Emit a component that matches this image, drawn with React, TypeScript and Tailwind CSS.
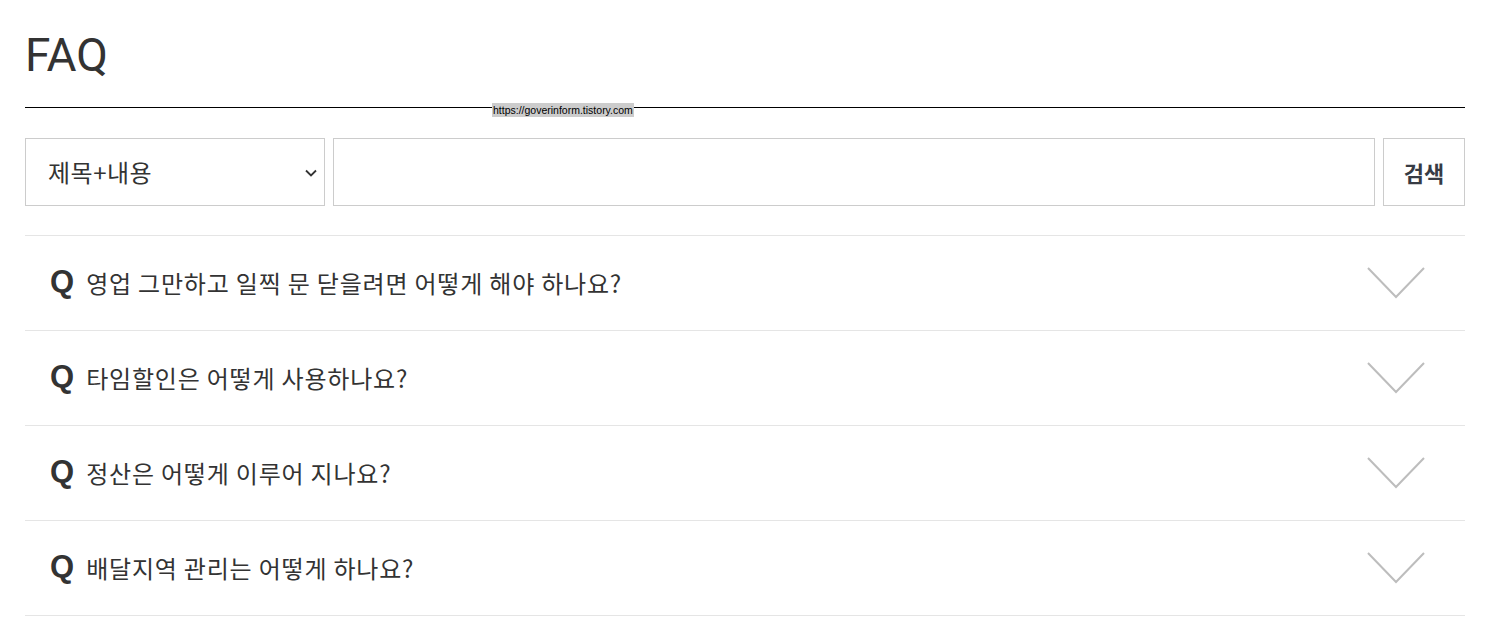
import React from 'react';

const faqs = [
  '영업 그만하고 일찍 문 닫을려면 어떻게 해야 하나요?',
  '타임할인은 어떻게 사용하나요?',
  '정산은 어떻게 이루어 지나요?',
  '배달지역 관리는 어떻게 하나요?',
];

const kr = { fontFamily: '"Malgun Gothic", "Noto Sans CJK KR", "Noto Sans", sans-serif' };

const Chevron = () => (
  <svg width="58" height="32" viewBox="0 0 58 32" fill="none">
    <path d="M1 1 L29 30 L57 1" stroke="#bdbdbd" strokeWidth="2" />
  </svg>
);

const App = () => {
  return (
    <div className="w-full min-h-screen bg-white px-[25px] pt-[27px] text-[#333]">
      {/* Title */}
      <h1
        className="text-[46px] leading-[56px] font-normal"
        style={{ fontFamily: 'Roboto, "Noto Sans", sans-serif' }}
      >
        FAQ
      </h1>
      <div className="relative mt-[24px] border-t border-black w-[1440px]">
        <span
          className="absolute left-[467px] top-[-5px] bg-[#cccccc] px-[1px] text-[10.5px] leading-[14px] text-black"
          style={{ fontFamily: '"Liberation Sans", Arial, sans-serif' }}
        >
          https://goverinform.tistory.com
        </span>
      </div>

      {/* Search */}
      <div className="mt-[30px] flex gap-[8px] w-[1440px] h-[68px]" style={kr}>
        <div className="relative w-[300px] h-full border border-[#cccccc] flex items-center pl-[22px] text-[24px] tracking-[0.5px]">
          제목+내용
          <svg
            className="absolute right-[6px] top-[27px]"
            width="14"
            height="14"
            viewBox="0 0 14 14"
            fill="none"
          >
            <path d="M2 4.5 L7 9.5 L12 4.5" stroke="#333" strokeWidth="1.8" />
          </svg>
        </div>
        <input className="flex-1 h-full border border-[#cccccc] outline-none px-3" />
        <button className="w-[82px] h-full border border-[#cccccc] bg-white text-[22px] font-bold text-[#373b44]">
          검색
        </button>
      </div>

      {/* List */}
      <ul className="mt-[29px] w-[1440px] border-t border-[#e5e5e5]">
        {faqs.map((q) => (
          <li
            key={q}
            className="h-[95px] border-b border-[#e5e5e5] flex items-center justify-between pl-[25px] pr-[40px]"
          >
            <div className="flex items-center -mt-[3px]">
              <span
                className="text-[31px] font-bold text-[#333] mr-[12px] leading-none"
                style={{ fontFamily: '"Liberation Sans", Arial, sans-serif' }}
              >
                Q
              </span>
              <span className="text-[24px] tracking-[0.8px] text-[#333] mt-[2px]" style={kr}>
                {q}
              </span>
            </div>
            <Chevron />
          </li>
        ))}
      </ul>
    </div>
  );
};

export default App;
